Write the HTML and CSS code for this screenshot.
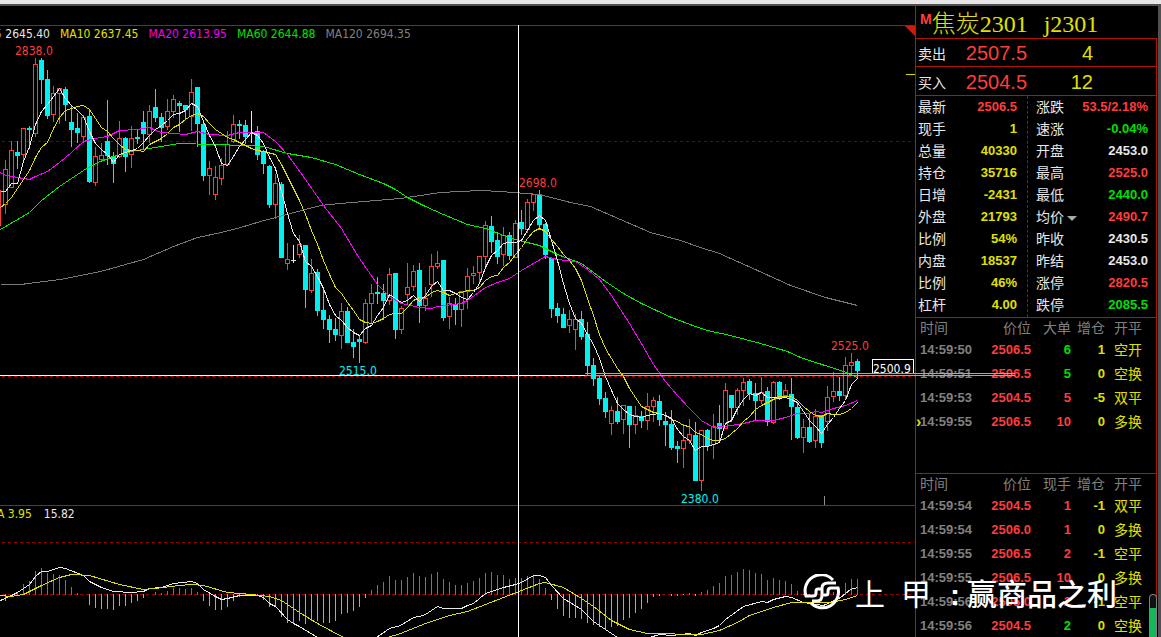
FILE: index.html
```html
<!DOCTYPE html>
<html lang="zh-CN">
<head>
<meta charset="utf-8">
<title>焦炭2301</title>
<link rel="stylesheet" href="styles.css">
</head>
<body>
<div class="window-edge"></div>
<main class="terminal">
  <section class="charts">
    <div class="pane pane-price">
      <div class="legend">
        <span class="white"><i class="orange">5</i> 2645.40</span>
        <span class="yellow">MA10 2637.45</span>
        <span class="magenta">MA20 2613.95</span>
        <span class="green">MA60 2644.88</span>
        <span class="gray">MA120 2694.35</span>
      </div>
      <svg class="corner" viewBox="0 0 10 10"><path d="M0 0H10V10Z"/></svg>
      <svg class="plot" id="price" viewBox="0 42 915 463" preserveAspectRatio="xMinYMin meet"></svg>
    </div>
    <div class="pane pane-macd">
      <div class="legend">
        <span class="yellow">A 3.95</span>
        <span class="white">15.82</span>
      </div>
      <svg class="plot" id="macd" viewBox="0 522 915 115" preserveAspectRatio="xMinYMin meet"></svg>
    </div>
    <div class="cross"></div>
  </section>
  <aside class="quote">
    <h1><sup>M</sup><span>焦炭2301</span><span>j2301</span></h1>
    <div class="depth"><span>卖出</span><b>2507.5</b><b class="yellow">4</b></div>
    <div class="depth"><span>买入</span><b>2504.5</b><b class="yellow">12</b></div>
    <div class="stats">
      <dl id="stats-left"></dl>
      <dl id="stats-right"></dl>
    </div>
    <div class="ticks first"><table id="ticks-big"></table></div>
    <div class="ticks"><table id="ticks-all"></table></div>
    <div class="scroll"><div class="thumb"></div></div>
  </aside>
  <div class="gutter"></div>
  <div class="order-line"></div>
  <div class="brand">
    <svg viewBox="0 0 38 36" class="brand-mark">
      <path d="M30 6A16 16 0 0 0 3 22H10Q13 22 13 19V17Q13 15 15 15H19"/>
      <path d="M8 29A16 16 0 0 0 35 14H28Q25 14 25 17V19Q25 21 23 21H19"/>
      <path d="M33 9H25Q19 9 19 14V21Q19 27 14 27H9"/>
    </svg>
    <span class="glyph">上</span><span class="glyph">甲</span><span class="glyph colon">:</span><span>赢商品之利</span>
  </div>
</main>
<script src="chart.js"></script>
</body>
</html>
```
FILE: styles.css
```css
* { box-sizing: border-box; }
body {
  margin: 0;
  height: 100vh;
  display: flex;
  flex-direction: column;
  overflow: hidden;
  background: #000;
  color: #e8e8e8;
  font-family: "Liberation Sans", "Noto Sans CJK SC", sans-serif;
}
.window-edge { flex: none; height: 6px; background: #e6e6e6; border-bottom: 2px solid #505050; }
.terminal { flex: 1; min-height: 0; display: flex; position: relative; }
.charts { flex: 1; min-width: 0; padding-top: 19px; position: relative; overflow: hidden; }
.pane { border-top: 1px solid #b41408; position: relative; }
.legend {
  display: flex;
  gap: 10px;
  height: 16px;
  margin-left: -5px;
  line-height: 16px;
  white-space: pre;
  font-family: "DejaVu Sans Condensed", "DejaVu Sans", sans-serif;
  font-size: 12px;
}
.pane-macd .legend { gap: 12px; margin-left: -3px; }
.legend i { font-style: normal; }
.plot { display: block; width: 100%; height: 463px; shape-rendering: crispEdges; }
#macd { height: 115px; }
.plot text { font: 12px "DejaVu Sans Condensed", "DejaVu Sans", sans-serif; }
.corner { position: absolute; top: 0; right: 0; width: 10px; height: 10px; fill: #d01a0c; }
.cross { position: absolute; left: 518px; top: 19px; bottom: 0; width: 1px; background: #fff; }

.white { color: #e8e8e8; }
.yellow { color: #e0e000; }
.magenta { color: #f000f0; }
.green { color: #00e000; }
.gray { color: #808080; }
.red { color: #ff3c3c; }
.orange { color: #c08040; }

.quote { flex: none; width: 242px; display: flex; flex-direction: column; position: relative; border-left: 1px solid #b41408; overflow: hidden; }
.quote h1 {
  display: flex;
  margin: 0;
  flex: none;
  height: 32px;
  padding-left: 4px;
  font: 300 24px/36px "Liberation Serif", "Noto Sans CJK SC", serif;
  color: #e0e000;
}
.quote h1 span + span { margin-left: 16px; }
.quote sup { font: bold 14px/26px "Liberation Sans", sans-serif; color: #ff3c3c; }
.depth {
  flex: none;
  height: 28px;
  display: grid;
  grid-template-columns: 30px 79px 66px;
  align-items: center;
  padding-left: 2px;
  border-top: 1px solid #b41408;
  border-right: 1px solid #b41408;
  font-size: 14px;
}
.depth + .depth { height: 29px; padding-top: 2px; }
.depth b { font-size: 20px; font-weight: 400; color: #ff3c3c; text-align: right; line-height: 24px; }
.depth b.yellow { color: #e0e000; }
.stats { flex: none; display: grid; grid-template-columns: 112px 129px; border-top: 1px solid #b41408; border-right: 1px solid #b41408; }
.stats dl { margin: 0; padding: 0 9px 1px 8px; }
.stats dl:first-child { padding: 0 10px 1px 2px; border-right: 1px dashed #a01408; }
.stats dl div { display: flex; justify-content: space-between; height: 22px; line-height: 22px; }
.stats dt { font-size: 14px; }
.stats dd { margin: 0; font-size: 13px; font-weight: 700; }
.caret { display: inline-block; margin-left: 3px; border: 5px solid transparent; border-top-color: #a8a8a8; border-bottom: 0; vertical-align: 1px; }
.ticks { flex: 1; border-top: 1px solid #b41408; border-right: 1px solid #b41408; overflow: hidden; }
.ticks.first { flex: none; height: 156px; }
.ticks table { border-collapse: collapse; table-layout: fixed; width: 240px; font-size: 13px; }
.ticks th, .ticks td { padding: 0; height: 24px; line-height: 22px; text-align: right; font-weight: 700; white-space: nowrap; }
.ticks th { height: 20px; line-height: 20px; font-size: 14px; font-weight: 400; color: #808080; }
.ticks tr > :first-child { width: 56px; padding-left: 4px; text-align: left; }
.ticks tr > :nth-child(2) { width: 59px; }
.ticks tr > :nth-child(3) { width: 40px; }
.ticks tr > :nth-child(4) { width: 34px; }
.ticks tr > :last-child { padding-left: 9px; text-align: left; font-size: 14px; font-weight: 400; }
.ticks .current { position: relative; }
.ticks .current::before { content: "›"; position: absolute; left: 0; font-size: 16px; color: #e0e000; }
.scroll { position: absolute; right: 0; bottom: 0; width: 8px; height: 43px; padding-top: 13px; border: 1px solid #808080; border-bottom: 0; border-radius: 4px 4px 0 0; background: #111; }
.thumb { height: 30px; background: #14b85a; }
.gutter { flex: none; width: 4px; border-left: 1px solid #000; background: #505050; }
.order-line { position: absolute; left: 585px; right: 146px; top: 367px; height: 3px; border: solid #a0c818; border-width: 1px 0; }
.brand {
  position: absolute;
  left: 803px;
  top: 567px;
  display: flex;
  align-items: center;
  height: 44px;
  color: #fff;
  font-size: 30px;
  line-height: 44px;
  font-weight: 500;
  white-space: nowrap;
}
.brand-mark { width: 38px; height: 36px; margin: 0 14px 6px 0; fill: none; stroke: #fff; stroke-width: 3; }
.glyph { width: 46px; font-weight: 400; }
.glyph.colon { width: 20px; padding-left: 3px; font-weight: 700; }
```
FILE: chart.js
```js
const NS = 'http://www.w3.org/2000/svg';
const RED = '#ff3c3c', CYAN = '#00f0f0', WHITE = '#e8e8e8', YELLOW = '#e0e000';

function add(svg, tag, attrs, text) {
  const el = document.createElementNS(NS, tag);
  for (const k in attrs) el.setAttribute(k, attrs[k]);
  if (text) el.textContent = text;
  svg.appendChild(el);
}
function line(svg, points, color) {
  const pts = points.trim().split(/\s+/).map(p => p.split(',').map(n => +n + 0.5).join(',')).join(' ');
  add(svg, 'polyline', { points: pts, fill: 'none', stroke: color, 'stroke-width': 1 });
}
function dashed(svg, y, color) {
  add(svg, 'line', { x1: 2, x2: 915, y1: y + 0.5, y2: y + 0.5, stroke: color, 'stroke-dasharray': '3 3' });
}

const price = document.getElementById('price');
dashed(price, 141, '#800000');
dashed(price, 376, '#b00000');

// Each candle: kind, high, body top, body bottom, low; one every 6 units.
const candles = `r160,169,205,214 r141,150,188,188 c141,152,156,169 r128,128,155,161 c126,128,130,149 r58,64,134,137 c58,60,80,104
c70,79,116,119 r86,93,115,122 r88,88,94,124 c87,89,105,121 c106,122,130,147 c113,128,133,143 r115,117,137,143 c110,116,182,183
r147,156,183,186 r143,155,160,161 c100,141,156,165 c152,156,164,183 r121,138,157,158 c137,138,157,172 r126,138,155,168 c129,137,139,144
c111,122,134,149 r105,111,135,143 c89,107,118,122 c113,117,128,142 r99,111,127,130 r95,99,112,118 c101,103,106,132 c105,105,110,119
r79,92,117,131 c87,87,124,147 c122,124,176,181 r161,168,176,195 r166,177,195,200 r158,165,179,185 r131,144,165,166 r115,124,142,143
c120,124,126,139 c120,125,137,144 w111,132,133,143 c126,131,155,160 c150,151,164,174 c165,166,205,208 r174,183,205,219 c182,184,258,258
r243,259,264,270 w245,260,261,263 r235,244,255,258 c245,245,290,308 r259,273,291,293 c269,272,311,316 c290,310,320,329 c315,319,330,343
c318,329,335,341 r303,311,336,349 c307,311,343,343 c329,342,347,358 c335,339,342,363 r299,303,343,344 r284,293,304,323 c277,292,294,304
c284,293,301,320 r268,274,301,305 c273,273,330,339 r306,308,330,334 r263,287,295,304 r265,271,287,291 c263,270,306,323 r287,298,306,311
r254,266,285,297 r251,263,267,269 c260,260,318,321 r297,303,317,329 c298,304,310,325 r291,291,310,327 r268,276,292,309 r266,273,276,284
r256,256,273,283 r221,225,257,269 c216,226,242,253 c232,240,257,264 r227,235,255,266 c232,235,256,260 r220,223,258,258 c210,222,229,235
r199,202,230,233 r194,194,203,211 c190,194,225,230 c223,224,255,259 c257,258,309,318 c303,308,316,323 c308,314,328,328 r310,319,326,333
r314,319,330,350 c311,319,337,340 c322,334,366,375 c358,365,379,386 c375,378,399,405 c392,398,412,418 r406,410,424,435 c397,411,422,424
r405,405,420,434 c406,406,425,448 r406,415,425,434 c411,416,421,428 r393,406,421,430 r397,400,407,422 c395,401,420,426 c412,421,425,446
c410,424,448,450 c441,446,449,463 r424,440,449,468 r419,434,441,444 c422,435,481,481 r430,430,481,491 c429,430,446,451 r414,426,445,459
c405,423,429,443 r383,390,429,429 c395,395,408,422 r388,390,408,415 r378,382,391,406 c379,381,394,400 c383,393,401,420 r377,392,401,404
c387,391,422,426 r381,382,423,424 c381,382,398,400 r384,390,396,398 c378,394,407,440 c403,407,438,439 r419,427,438,453 c414,427,442,443
r409,416,441,448 c415,415,443,448 r386,397,422,431 r372,391,397,402 c377,391,396,401 r357,365,396,400 r353,362,366,374 c359,361,371,379`.split(/\s+/);

add(price, 'rect', { x: -4, y: 190, width: 5, height: 36, fill: RED });
candles.forEach((c, i) => {
  const x = 5 + i * 6;
  const color = { r: RED, c: CYAN, w: WHITE }[c[0]];
  const [hi, top, bottom, lo] = c.slice(1).split(',').map(Number);
  add(price, 'rect', { x, y: hi, width: 1, height: lo - hi, fill: color });
  if (c[0] === 'r') {
    add(price, 'rect', { x: x - 1.5, y: top + 0.5, width: 4, height: Math.max(bottom - top - 1, 1), fill: '#000', stroke: color });
  } else {
    add(price, 'rect', { x: x - 2, y: top, width: 5, height: Math.max(bottom - top, 1), fill: color });
  }
});

line(price, `0,284 20,284 60,279 100,271 143,259 173,246 197,237 221,232 240,227 260,221 290,213 320,205 340,203 400,198 440,192
480,190 500,191 539,194 570,202 590,206 620,219 650,232 680,240 700,247 719,253 757,270 790,285 825,297 857,305`, '#787878');
line(price, `0,229 29,212 41,200 59,186 83,170 95,163 113,156 131,151 149,148 179,143 245,145 263,146 287,153 311,157 335,164 359,174
383,183 395,189 407,197 425,206 443,214 467,224 485,228 503,235 515,239 539,245 557,254 581,263 605,281 623,293 641,303 671,317 695,326
707,330 730,335 760,343 787,351 800,357 843,371 857,377`, '#00f000');
line(price, `0,172 5,175 17,177 29,179 35,176 47,171 59,162 71,152 83,141 95,138 107,136 119,130 137,129 149,127 155,130 161,132 185,134
197,131 209,134 227,135 239,132 263,132 275,141 287,154 305,179 323,205 341,228 359,258 377,284 389,296 401,303 419,307 431,308 437,306
461,303 467,300 485,287 497,282 509,278 521,270 533,263 545,256 557,259 575,261 587,269 599,279 611,295 629,323 641,343 653,364 665,381
677,395 689,408 701,420 713,427 731,425 743,423 755,420 773,420 785,417 797,413 809,413 815,411 821,412 833,408 845,405 857,400`, '#ff00ff');
line(price, `0,207 5,203 11,197 17,188 23,179 29,170 35,157 41,147 47,142 53,128 59,117 65,110 71,108 77,106 83,105 89,109 95,118 101,127
107,131 113,138 119,144 125,149 131,150 137,150 143,151 149,144 155,141 161,138 167,133 173,127 179,124 185,119 191,115 197,113 203,116
209,123 215,129 221,133 227,137 233,139 239,142 245,145 251,148 257,150 263,151 275,154 281,164 287,176 293,188 299,200 305,214 311,230
317,244 323,260 329,274 335,287 341,293 347,302 353,310 359,319 365,322 371,323 377,321 383,318 389,314 395,313 401,313 407,307 413,300
419,297 425,297 431,292 437,290 443,292 449,295 455,293 461,292 467,290 473,290 479,287 485,280 491,276 497,275 503,267 509,262 515,254
521,247 527,238 533,231 539,228 545,231 551,239 557,246 563,254 569,260 575,268 581,280 587,298 593,315 599,334 605,348 611,358 617,368
623,376 629,388 635,397 641,406 647,409 653,412 659,413 665,415 671,419 677,421 683,425 689,426 695,432 701,434 707,438 713,440 719,440
725,438 731,433 737,428 743,421 749,416 755,409 761,405 767,402 773,399 779,396 785,396 791,396 797,400 803,406 809,411 815,415 821,416
827,413 833,414 839,414 845,412 851,408 857,402`, YELLOW);
line(price, `0,191 5,191 11,183 17,183 23,161 29,146 35,124 41,111 47,104 53,96 59,88 65,98 71,105 77,110 83,116 89,131 95,143 101,149
107,154 113,162 119,154 125,152 131,150 137,148 143,142 149,135 155,129 161,125 167,120 173,114 179,113 185,110 191,103 197,106 203,121
209,135 215,146 221,163 227,165 233,156 239,146 245,139 251,132 257,135 263,143 269,157 275,168 281,191 287,213 293,233 299,241 305,261
311,266 317,276 323,288 329,304 335,315 341,320 347,327 353,332 359,335 365,328 371,325 377,315 383,307 389,294 395,298 401,302 407,300
413,295 419,301 425,295 431,286 437,281 443,290 449,290 455,293 461,297 467,299 473,292 479,283 485,267 491,255 497,250 503,243 509,242
515,242 521,240 527,230 533,220 539,215 545,220 551,240 557,260 563,283 569,303 575,318 581,323 587,334 593,344 599,358 605,376 611,390
617,403 623,409 629,414 635,416 641,417 647,415 653,414 659,413 665,415 671,418 677,429 683,436 689,440 695,450 701,446 707,446 713,444
719,442 725,423 731,420 737,408 743,399 749,393 755,395 761,392 767,397 773,397 779,398 785,397 791,399 797,402 803,411 809,420 815,426
821,433 827,424 833,417 839,408 845,400 851,384 857,378`, WHITE);

[[15, 55, '2838.0', RED], [519, 187, '2698.0', RED], [831, 350, '2525.0', RED], [339, 375, '2515.0', CYAN], [681, 503, '2380.0', CYAN]]
  .forEach(([x, y, t, fill]) => add(price, 'text', { x, y, fill }, t));
add(price, 'rect', { x: 0, y: 375, width: 915, height: 1, fill: '#fff' });
add(price, 'rect', { x: 906, y: 74, width: 9, height: 1, fill: YELLOW });
add(price, 'rect', { x: 824, y: 496, width: 1, height: 9, fill: '#909090' });
add(price, 'rect', { x: 872.5, y: 359.5, width: 41, height: 14, fill: '#000', stroke: '#fff' });
add(price, 'text', { x: 873, y: 373, fill: '#fff' }, '2500.9');

const macd = document.getElementById('macd');
dashed(macd, 542, '#900000');
dashed(macd, 594, '#900000');
// Histogram bar ends, one every 6 units; 594 is the zero line.
const bars = `601 594 593 584 581 571 568 573 574 575 580 587 593 594 605 608 609 609 610 606 606 603 601 598 594 592 593 591 588 588 589 588 592
601 606 610 610 607 601 597 596 594 596 600 607 607 617 623 624 621 624 621 621 623 623 621 614 613 611 607 598 590 585 582 576 580 580 577
573 576 577 574 572 579 582 585 585 583 581 578 573 572 575 575 579 578 578 576 576 579 588 600 609 616 618 618 619 623 625 627 629 627 626
620 618 613 609 603 597 596 594 596 596 595 593 596 592 590 586 583 576 575 572 569 570 573 574 580 578 580 581 584 591 595 595 596 593
594 592 588 583 579 579`.split(/\s+/).map(Number);
bars.forEach((y, i) => {
  if (y === 594) return;
  const up = y < 594;
  add(macd, 'rect', { x: 5 + i * 6, y: up ? y : 594, width: 1, height: Math.abs(594 - y) + (up ? 1 : 0), fill: up ? RED : CYAN });
});
line(macd, `0,600 11,595 17,592 29,584 35,576 41,571 47,571 59,567 65,568 83,575 89,581 101,587 113,591 131,592 143,591 149,588 161,587
173,583 191,581 197,583 203,589 215,596 221,599 227,598 239,595 257,595 263,597 269,603 275,606 287,619 293,623 299,626 317,637 340,650
355,650 376,637 389,628 400,625 413,617 419,616 425,614 437,606 443,608 461,608 467,605 473,603 479,598 485,593 503,587 515,584 521,582
533,575 539,575 545,577 551,585 563,598 581,609 593,621 617,637 630,642 649,637 659,634 671,635 689,633 695,635 701,632 713,628 719,625
725,619 743,606 761,601 767,602 773,599 785,596 791,597 803,602 823,605 840,597 850,589 857,587`, WHITE);
line(macd, `0,595 11,596 23,594 41,585 59,577 71,574 89,575 119,584 143,589 155,588 179,585 191,584 203,585 227,592 251,594 269,596
281,600 299,612 317,623 343,637 365,645 387,637 400,633 425,623 449,615 467,611 485,604 503,597 521,590 539,583 545,582 563,587 581,598
593,606 611,620 629,629 647,633 701,634 719,630 737,622 749,615 773,607 791,602 830,602 845,599 857,595`, YELLOW);

const COLORS = { r: 'red', y: 'yellow', g: 'green', w: 'white' };
function stats(id, rows) {
  document.getElementById(id).innerHTML = rows.map(([label, value, c]) =>
    `<div><dt>${label}</dt><dd class="${COLORS[c]}">${value}</dd></div>`).join('');
}
stats('stats-left', [['最新', '2506.5', 'r'], ['现手', '1', 'y'], ['总量', '40330', 'y'], ['持仓', '35716', 'y'], ['日增', '-2431', 'y'],
  ['外盘', '21793', 'y'], ['比例', '54%', 'y'], ['内盘', '18537', 'y'], ['比例', '46%', 'y'], ['杠杆', '4.00', 'y']]);
stats('stats-right', [['涨跌', '53.5/2.18%', 'r'], ['速涨', '-0.04%', 'g'], ['开盘', '2453.0', 'w'], ['最高', '2525.0', 'r'], ['最低', '2440.0', 'g'],
  ['均价<i class="caret"></i>', '2490.7', 'r'], ['昨收', '2430.5', 'w'], ['昨结', '2453.0', 'w'], ['涨停', '2820.5', 'r'], ['跌停', '2085.5', 'g']]);

function ticks(id, head, rows) {
  document.getElementById(id).innerHTML =
    `<tr>${head.map(h => `<th>${h}</th>`).join('')}</tr>` +
    rows.map(([t, p, v, c, d, k, current]) =>
      `<tr><td class="gray${current ? ' current' : ''}">14:59:${t}</td><td class="red">${p}</td><td class="${COLORS[c]}">${v}</td><td class="yellow">${d}</td><td class="yellow">${k}</td></tr>`).join('');
}
ticks('ticks-big', ['时间', '价位', '大单', '增仓', '开平'], [
  ['50', '2506.5', 6, 'g', '1', '空开'], ['51', '2506.5', 5, 'g', '0', '空换'],
  ['53', '2504.5', 5, 'r', '-5', '双平'], ['55', '2506.5', 10, 'r', '0', '多换', true]]);
ticks('ticks-all', ['时间', '价位', '现手', '增仓', '开平'], [
  ['54', '2504.5', 1, 'r', '-1', '双平'], ['54', '2506.0', 1, 'r', '0', '多换'], ['55', '2506.5', 2, 'r', '-1', '空平'],
  ['55', '2506.5', 10, 'r', '0', '多换'], ['56', '2505.0', 2, 'r', '-1', '空平'], ['56', '2504.5', 2, 'g', '0', '空换']]);
```
